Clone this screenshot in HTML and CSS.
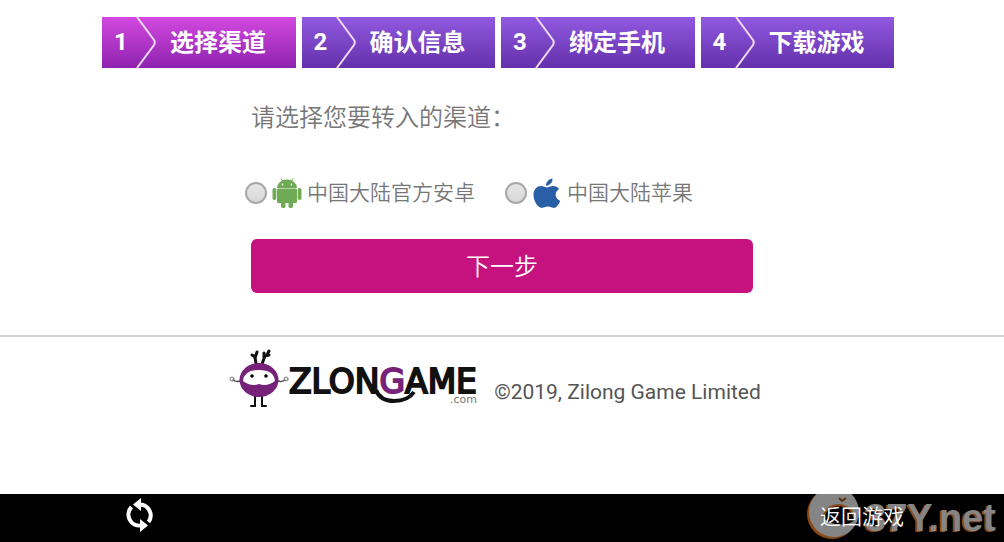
FILE: index.html
```html
<!DOCTYPE html>
<html lang="zh-CN">
<head>
    <meta charset="UTF-8">
    <meta name="viewport" content="width=device-width, initial-scale=1.0">
    <title>选择渠道</title>
    <link rel="stylesheet" href="styles.css">
</head>
<body>
    <ol class="steps">
        <li class="step active">
            <span class="step-num">1</span>
            <svg class="step-arrow" viewBox="0 0 20 51"><path d="M1 0 18 23Q19.500 25.500 18 28L1 51"/></svg>
            <span class="step-name">选择渠道</span>
        </li>
        <li class="step">
            <span class="step-num">2</span>
            <svg class="step-arrow" viewBox="0 0 20 51"><path d="M1 0 18 23Q19.500 25.500 18 28L1 51"/></svg>
            <span class="step-name">确认信息</span>
        </li>
        <li class="step">
            <span class="step-num">3</span>
            <svg class="step-arrow" viewBox="0 0 20 51"><path d="M1 0 18 23Q19.500 25.500 18 28L1 51"/></svg>
            <span class="step-name">绑定手机</span>
        </li>
        <li class="step">
            <span class="step-num">4</span>
            <svg class="step-arrow" viewBox="0 0 20 51"><path d="M1 0 18 23Q19.500 25.500 18 28L1 51"/></svg>
            <span class="step-name">下载游戏</span>
        </li>
    </ol>

    <form class="channel-form">
        <p class="prompt">请选择您要转入的渠道：</p>
        <div class="channels">
            <label class="channel">
                <input type="radio" name="channel" value="android">
                <svg class="channel-icon" viewBox="0 0 30 30" fill="#6fab54">
                    <path d="M5 10a10 8.500 0 0 1 20 0z"/>
                    <path d="M9 0.500 11 4M21 0.500 19 4" stroke="#6fab54" fill="none"/>
                    <rect x="5" y="10.500" width="20" height="14.500" rx="1.500"/>
                    <rect x="0.500" y="10" width="3.800" height="12" rx="1.800"/>
                    <rect x="25.700" y="10" width="3.800" height="12" rx="1.800"/>
                    <rect x="9" y="22" width="4.500" height="8" rx="1.700"/>
                    <rect x="16.500" y="22" width="4.500" height="8" rx="1.700"/>
                    <circle cx="10.500" cy="6.500" r="0.900" fill="#fff"/>
                    <circle cx="19.500" cy="6.500" r="0.900" fill="#fff"/>
                </svg>
                <span>中国大陆官方安卓</span>
            </label>
            <label class="channel">
                <input type="radio" name="channel" value="apple">
                <svg class="channel-icon" viewBox="0 0 30 30" fill="#295fa6">
                    <path d="M20.500 0.500c.3 3.500-2.500 7-6.500 7.200C13.600 4.200 17 .9 20.500.5z"/>
                    <path d="M15 9.500c1.600 0 3.200-1.600 6.200-1.600 2.400 0 4.600 1.200 6 3.200-5.200 3-4.400 9.700 1 11.800-1.400 3.400-4 7-6.400 7-2.200 0-3.200-1.300-6-1.300s-3.900 1.300-5.900 1.300C6 29.900 1.500 23 1.500 17c0-5.600 3.500-9 7.500-9 2.700 0 4.500 1.500 6 1.500z"/>
                </svg>
                <span>中国大陆苹果</span>
            </label>
        </div>
        <button type="button" class="next-btn">下一步</button>
    </form>

    <footer class="footer">
        <svg class="logo" viewBox="0 0 250 60" role="img" aria-label="ZLONGAME.com">
            <g fill="none" stroke="#111" stroke-width="3" stroke-linecap="round">
                <path d="M27 15 26 8 23 6M26 9 28 3M33 15l3-8 4-1M35 9 35 4M38 6l2-4"/>
                <path d="M26 46v11h-4M33 46v11h4" stroke-width="2"/>
                <path d="M13 31Q8 34 4 31M47 31q5 3 9 0" stroke="#555" stroke-width="1.500"/>
                <circle cx="3" cy="30" r="2" stroke="#777" stroke-width="1"/>
                <circle cx="57" cy="30" r="2" stroke="#777" stroke-width="1"/>
            </g>
            <ellipse cx="30" cy="31" rx="19.500" ry="17" fill="#762278"/>
            <path d="M14 32Q15 21 30 21t16 11Q38 38 30 35 22 38 14 32z" fill="#fff"/>
            <circle cx="23" cy="27" r="1.800"/>
            <circle cx="37" cy="27" r="1.800"/>
            <path d="M147 41Q151 52 165 52 179 52 185 43" fill="none" stroke="#111" stroke-width="4"/>
            <text class="wordmark" x="60" y="44">ZLON<tspan class="wordmark-g">G</tspan>AME</text>
            <text class="wordmark-com" x="221" y="54">.com</text>
        </svg>
        <p class="copyright">©2019, Zilong Game Limited</p>
    </footer>

    <nav class="bottom-bar">
        <button type="button" class="bar-btn" aria-label="刷新">
            <svg class="refresh" viewBox="0 0 28 34">
                <g fill="none" stroke="#fff" stroke-width="4">
                    <path d="M5.500 9A11 11 0 0 0 15 27.500"/>
                    <path d="M22.500 24A11 11 0 0 0 14 6.500"/>
                </g>
                <path d="M15 0v13L7 6.500zM14 21v13l8-6.500z" fill="#fff"/>
            </svg>
        </button>
        <button type="button" class="bar-btn">返回游戏</button>
        <div class="watermark">
            <svg class="watermark-disc" viewBox="0 0 60 54">
                <circle cx="27" cy="28" r="25" fill="#8a4a14"/>
                <circle cx="29" cy="26" r="25" fill="#858585"/>
                <path d="M18 31Q22 19 34 19 47 20 50 34 42 40 31 38 22 37 18 31z" fill="#000"/>
                <path d="M18 31Q22 19 34 19 47 20 50 34" fill="none" stroke="#8a4a14" stroke-width="2"/>
                <path d="M34 12l3 3 4-3" fill="none" stroke="#5c300c" stroke-width="2"/>
            </svg>
            <span>37Y.net</span>
        </div>
    </nav>
</body>
</html>
```

FILE: styles.css
```css
* {
    box-sizing: border-box;
}

body {
    margin: 0;
    padding-bottom: 48px;
    background: #fff;
    color: #777;
    font-family: Roboto, "Noto Sans CJK SC", sans-serif;
    font-weight: 350;
}

.steps {
    display: flex;
    gap: 6px;
    max-width: 800px;
    margin: 17px auto 0;
    padding: 0 8px 0 0;
    list-style: none;
}

.step {
    flex: 1;
    display: flex;
    align-items: center;
    height: 51px;
    padding-left: 12px;
    background: linear-gradient(#9159e0, #6430ab);
    color: #fff;
    font-size: 24px;
    font-weight: 700;
}

.step.active {
    background: linear-gradient(#d348e0, #8e23ae);
}

.step-num {
    width: 22px;
    padding-bottom: 2px;
}

.step-arrow {
    width: 20px;
    height: 51px;
    fill: none;
    stroke: #f0dcfa;
    stroke-width: 2;
}

.step-name {
    margin-left: 14px;
    padding-bottom: 4px;
}

.channel-form {
    width: 50%;
    margin: 0 auto;
}

.prompt {
    margin: 0;
    padding-top: 33px;
    font-size: 24px;
    line-height: 34px;
}

.channels {
    display: flex;
    gap: 30px;
    margin: 42px 0 30px -6px;
    white-space: nowrap;
}

.channel {
    display: flex;
    align-items: center;
    gap: 5px;
    font-size: 21px;
    line-height: 32px;
}

.channel input {
    appearance: none;
    width: 22px;
    height: 22px;
    margin: 0;
    border: 2px solid #a8a8a8;
    border-radius: 50%;
    background: linear-gradient(#e6e6e6, #d8d8d8);
}

.channel input:checked {
    background: radial-gradient(#555 35%, #ddd 40%);
}

.channel-icon {
    width: 30px;
    height: 30px;
}

.next-btn {
    display: block;
    width: 100%;
    height: 54px;
    padding: 0 0 4px;
    border: none;
    border-radius: 6px;
    background: #c6127e;
    color: #fff;
    font: inherit;
    font-size: 24px;
    cursor: pointer;
}

.footer {
    display: flex;
    justify-content: center;
    gap: 15px;
    margin-top: 42px;
    padding: 12px 14px 0 0;
    border-top: 2px solid #d4d4d4;
}

.logo {
    width: 250px;
    height: 60px;
}

.wordmark {
    fill: #111;
    stroke: #111;
    stroke-width: 2px;
    font: 400 33px "DejaVu Sans", sans-serif;
}

.wordmark-g {
    fill: #762278;
    stroke: #762278;
}

.wordmark-com {
    fill: #777;
    font: 400 11px "DejaVu Sans", sans-serif;
}

.copyright {
    margin: 0;
    padding-top: 30px;
    color: #555;
    font-size: 21px;
    font-weight: 400;
    line-height: 26px;
}

.bottom-bar {
    position: fixed;
    left: 0;
    right: 0;
    bottom: 0;
    display: flex;
    justify-content: space-between;
    align-items: flex-start;
    height: 48px;
    padding: 4px 100px 0 126px;
    overflow: hidden;
    background: #000;
}

.bar-btn {
    position: relative;
    z-index: 1;
    padding: 0;
    border: none;
    background: none;
    color: #fff;
    font: inherit;
    font-size: 21px;
    line-height: 38px;
    cursor: pointer;
}

.refresh {
    display: block;
    width: 28px;
    height: 34px;
}

.watermark {
    position: absolute;
    right: 8px;
    bottom: 2px;
    display: flex;
    align-items: flex-end;
    color: #858585;
    font: 700 38px/44px "Liberation Sans", sans-serif;
    text-shadow: -2px 1px #8a4a14;
}

.watermark-disc {
    width: 60px;
    height: 54px;
}
```
